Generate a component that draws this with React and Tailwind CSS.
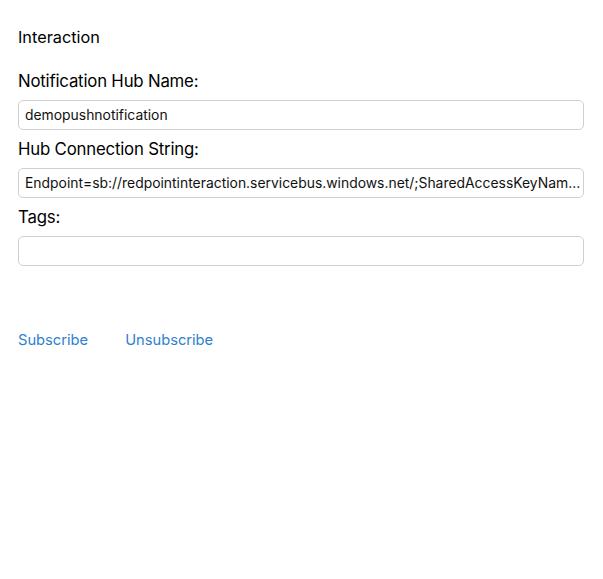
import React from 'react';

const fields = [
  { label: 'Notification Hub Name:', value: 'demopushnotification' },
  {
    label: 'Hub Connection String:',
    value: 'Endpoint=sb://redpointinteraction.servicebus.windows.net/;SharedAccessKeyNam...',
  },
  { label: 'Tags:', value: '' },
];

export default function App() {
  return (
    <div
      className="w-[603px] h-[579px] bg-white text-black px-[18px] pt-[27px]"
      style={{ fontFamily: 'Inter, "Noto Sans", sans-serif' }}
    >
      <p className="text-[16.3px] leading-[20px]">Interaction</p>

      <div className="mt-[24px] flex flex-col gap-[9px] w-[566px]">
        {fields.map((f) => (
          <div key={f.label}>
            <p className="text-[16.8px] leading-[20px] tracking-[-0.2px]">{f.label}</p>
            <div className="mt-[9px] h-[30px] rounded-[5px] border border-[#d0d0d0] px-[6px] flex items-center overflow-hidden">
              <span className="whitespace-nowrap text-[13.9px] text-[#111]">{f.value}</span>
            </div>
          </div>
        ))}
      </div>

      <div className="mt-[64px] flex gap-[37px] text-[14.7px] leading-[20px] text-[#2f7fd0]">
        <button>Subscribe</button>
        <button>Unsubscribe</button>
      </div>
    </div>
  );
}
